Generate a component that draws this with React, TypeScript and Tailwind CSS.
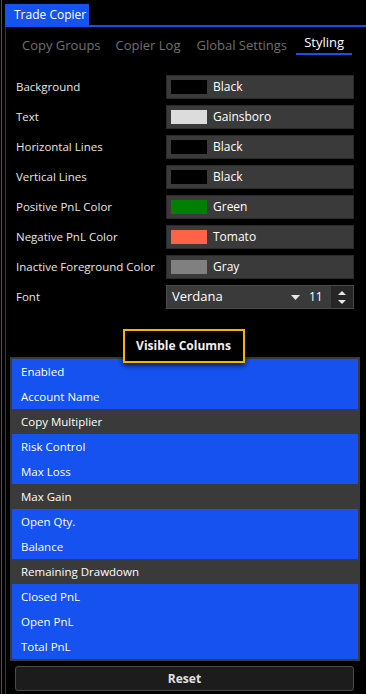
import React from 'react';

const font = { fontFamily: '"Open Sans", "Noto Sans", "Liberation Sans", sans-serif' };

const colorRows = [
  { label: 'Background', swatch: 'bg-black', name: 'Black' },
  { label: 'Text', swatch: 'bg-[#dcdcdc]', name: 'Gainsboro' },
  { label: 'Horizontal Lines', swatch: 'bg-black', name: 'Black' },
  { label: 'Vertical Lines', swatch: 'bg-black', name: 'Black' },
  { label: 'Positive PnL Color', swatch: 'bg-[#008000]', name: 'Green' },
  { label: 'Negative PnL Color', swatch: 'bg-[#ff6347]', name: 'Tomato' },
  { label: 'Inactive Foreground Color', swatch: 'bg-[#808080]', name: 'Gray' },
];

const columns = [
  { name: 'Enabled', on: true },
  { name: 'Account Name', on: true },
  { name: 'Copy Multiplier', on: false },
  { name: 'Risk Control', on: true },
  { name: 'Max Loss', on: true },
  { name: 'Max Gain', on: false },
  { name: 'Open Qty.', on: true },
  { name: 'Balance', on: true },
  { name: 'Remaining Drawdown', on: false },
  { name: 'Closed PnL', on: true },
  { name: 'Open PnL', on: true },
  { name: 'Total PnL', on: true },
];

function ColorRow({ label, swatch, name }: { label: string; swatch: string; name: string }) {
  return (
    <div className="flex items-center h-[24px]">
      <div className="w-[160px] pl-[10px] text-[11.5px] text-[#e6e6e6] whitespace-nowrap">{label}</div>
      <div className="w-[188px] h-[24px] bg-[#3a3a3a] border border-[#2a2a2a] flex items-center">
        <div className={`ml-[4px] w-[36px] h-[14px] ${swatch}`} />
        <div className="ml-[6px] text-[12px] text-white">{name}</div>
      </div>
    </div>
  );
}

export default function App() {
  return (
    <div className="w-[366px] h-[694px] bg-black overflow-hidden" style={font}>
      <div className="ml-[1px] h-full border-l border-[#1652f0] flex flex-col">
        {/* window tab */}
        <div className="h-[25px] pt-[4px] pl-[3px]">
          <div className="w-[84px] h-[21px] bg-[#1652f0] text-white text-[12px] pl-[9px] leading-[21px]">
            Trade Copier
          </div>
        </div>
        <div className="ml-[3px] h-[2px] bg-[#1652f0]" />

        <div className="ml-[3px] flex-1 border-l border-[#333] flex flex-col">
          {/* sub tabs */}
          <div className="flex items-end h-[28px] text-[13px] text-[#707070]">
            <div className="ml-[16px]">Copy Groups</div>
            <div className="ml-[15px]">Copier Log</div>
            <div className="ml-[16px]">Global Settings</div>
            <div className="ml-[9px] w-[56px] text-center text-white border-b-2 border-[#1652f0] pb-[1px]">Styling</div>
          </div>

          <div className="mt-[20px] flex flex-col gap-[6px]">
            {colorRows.map((r) => (
              <ColorRow key={r.label} {...r} />
            ))}
            <div className="flex items-center h-[24px]">
              <div className="w-[160px] pl-[10px] text-[11.5px] text-[#e6e6e6]">Font</div>
              <div className="w-[188px] h-[24px] bg-[#3a3a3a] border border-[#4a4a4a] flex items-center">
                <div className="ml-[5px] flex-1 text-[13px] text-white">Verdana</div>
                <svg width="9" height="5" viewBox="0 0 9 5" className="mr-[9px]">
                  <path d="M0 0 L9 0 L4.5 5 Z" fill="#e8e8e8" />
                </svg>
                <div className="w-[12px] text-[12px] text-white">11</div>
                <div className="ml-[10px] w-[22px] h-full bg-[#262626] flex flex-col items-center justify-center gap-[5px]">
                  <svg width="8" height="4" viewBox="0 0 8 4">
                    <path d="M0 4 L8 4 L4 0 Z" fill="#e8e8e8" />
                  </svg>
                  <svg width="8" height="4" viewBox="0 0 8 4">
                    <path d="M0 0 L8 0 L4 4 Z" fill="#e8e8e8" />
                  </svg>
                </div>
              </div>
            </div>
          </div>

          {/* visible columns */}
          <div className="mt-[20px] flex justify-center relative z-10 -mb-[6px]">
            <div className="w-[122px] h-[34px] border-2 border-[#f5b400] bg-black flex items-center justify-center text-[12px] font-bold text-[#f0f0f0] shadow-[0_2px_6px_rgba(0,0,0,0.8)] -ml-[5px]">
              Visible Columns
            </div>
          </div>
          <div className="ml-[4px] w-[350px] border-2 border-[#3a3a3a] flex flex-col">
            {columns.map((c) => (
              <div
                key={c.name}
                className={`h-[25px] pl-[9px] flex items-center text-[11.5px] text-white ${c.on ? 'bg-[#1652f0]' : 'bg-[#3a3a3a]'}`}
              >
                {c.name}
              </div>
            ))}
          </div>

          <div className="mt-[5px] ml-[9px] w-[339px] h-[25px] bg-[#1c1c1c] border border-[#4a4a4a] rounded-[3px] flex items-center justify-center text-[12px] font-bold text-[#e0e0e0]">
            Reset
          </div>
        </div>
      </div>
    </div>
  );
}
